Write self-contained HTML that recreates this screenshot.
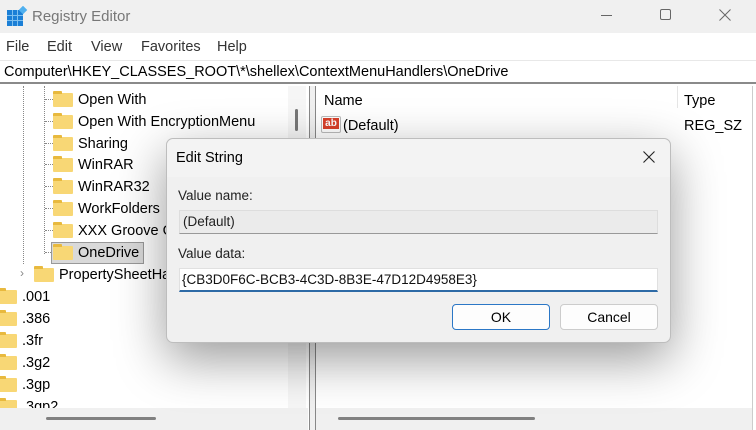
<!DOCTYPE html>
<html><head><meta charset="utf-8"><style>
*{margin:0;padding:0;box-sizing:border-box}
body{width:756px;height:430px;overflow:hidden;background:#fff;font-family:"Liberation Sans",sans-serif;font-size:14.5px;color:#000;position:relative}
.abs{position:absolute}
.title{left:0;top:0;width:756px;height:33px;background:#f0f0f0}
.menu{left:0;top:33px;width:756px;height:27px;background:#fff}
.menu span{position:absolute;top:6px;color:#333;font-size:14.5px}
.addr{left:0;top:60px;width:756px;height:24px;background:#fff;border-top:1px solid #e8e8e8;border-bottom:2px solid #8a8a8a}
.row{position:absolute;height:20px;line-height:20px;white-space:nowrap}
.fold{position:absolute;width:20px;height:14px;background:#f8d775;border-radius:1px}
.fold:before{content:"";position:absolute;left:0;top:-2px;width:9px;height:3px;background:#e8b93e;border-radius:1px 1px 0 0}
.vdot{position:absolute;width:0;border-left:1px dotted #888}
.hdot{position:absolute;height:0;border-top:1px dotted #888;width:8px}
</style></head><body>
<div class="abs title"></div>
<svg class="abs" style="left:6px;top:6px" width="22" height="22" viewBox="0 0 22 22">
<rect x="1" y="4" width="16" height="16" fill="#1b7fd6"/>
<g stroke="#7ec0f0" stroke-width="1"><line x1="6.5" y1="4" x2="6.5" y2="20"/><line x1="11.5" y1="4" x2="11.5" y2="20"/><line x1="1" y1="9.5" x2="17" y2="9.5"/><line x1="1" y1="14.5" x2="17" y2="14.5"/></g>
<rect x="14" y="1" width="6" height="6" fill="#4fb0ef" transform="rotate(45 17 4)"/></svg>
<div class="abs" style="left:32px;top:8px;font-size:15px;color:#777">Registry Editor</div>
<div class="abs" style="left:601px;top:15px;width:11px;height:1px;background:#666"></div>
<div class="abs" style="left:660px;top:9px;width:11px;height:11px;border:1px solid #666;border-radius:2px"></div>
<svg class="abs" style="left:719px;top:9px" width="12" height="12"><path d="M0.5 0.5L11.5 11.5M11.5 0.5L0.5 11.5" stroke="#666" stroke-width="1"/></svg>
<div class="abs menu"><span style="left:6px">File</span><span style="left:47px">Edit</span><span style="left:91px">View</span><span style="left:141px">Favorites</span><span style="left:217px">Help</span></div>
<div class="abs addr"><div style="position:absolute;left:4px;top:3px;font-size:14.5px">Computer\HKEY_CLASSES_ROOT\*\shellex\ContextMenuHandlers\OneDrive</div></div>

<div class="abs" style="left:0;top:86px;width:310px;height:344px;background:#fff;overflow:hidden">
<div class="vdot" style="left:23px;top:0;height:178px"></div>
<div class="vdot" style="left:44px;top:0;height:168px"></div>
</div>
<div id="tree"></div>
<div class="abs" style="left:288px;top:86px;width:18px;height:322px;background:#f6f6f6"></div>
<div class="abs" style="left:295px;top:109px;width:3px;height:22px;background:#777;border-radius:2px"></div>
<div class="abs" style="left:0;top:408px;width:308px;height:22px;background:#f0f0f0"></div>
<div class="abs" style="left:46px;top:417px;width:110px;height:3px;background:#808080;border-radius:2px"></div>
<div class="abs" style="left:309px;top:86px;width:1px;height:344px;background:#888"></div>
<div class="abs" style="left:315px;top:86px;width:1px;height:344px;background:#888"></div>
<div class="abs" style="left:310px;top:86px;width:5px;height:344px;background:#f0f0f0"></div>
<div class="abs" style="left:324px;top:93px">Name</div>
<div class="abs" style="left:677px;top:86px;width:1px;height:22px;background:#e5e5e5"></div>
<div class="abs" style="left:684px;top:93px">Type</div>
<div class="abs" style="left:321px;top:116px;width:20px;height:17px;background:#fff;border:1px solid #bbb;border-radius:2px"><div style="position:absolute;left:1px;top:1px;width:16px;height:11px;background:#d9402b;color:#fff;font-size:10px;font-weight:bold;line-height:11px;text-align:center">ab</div></div>
<div class="abs" style="left:343px;top:118px">(Default)</div>
<div class="abs" style="left:684px;top:118px">REG_SZ</div>
<div class="abs" style="left:316px;top:408px;width:436px;height:22px;background:#f0f0f0"></div>
<div class="abs" style="left:338px;top:417px;width:197px;height:3px;background:#808080;border-radius:2px"></div>
<div class="abs" style="left:752px;top:86px;width:4px;height:344px;background:#fff;border-left:1px solid #ccc"></div>

<div class="abs" style="left:166px;top:138px;width:505px;height:205px;background:#f0f0f0;border:1px solid #bdbdbd;border-radius:7px;box-shadow:0 16px 50px rgba(0,0,0,.4)">
<div style="position:absolute;left:0;top:0;width:503px;height:38px;background:#f3f3f3;border-radius:7px 7px 0 0"></div>
<div style="position:absolute;left:9px;top:11px;font-size:14.5px">Edit String</div>
<svg style="position:absolute;left:476px;top:12px" width="12" height="12"><path d="M0.5 0.5L11.5 11.5M11.5 0.5L0.5 11.5" stroke="#222" stroke-width="1.1"/></svg>
<div style="position:absolute;left:11px;top:49px;font-size:13.5px;color:#222">Value name:</div>
<div style="position:absolute;left:12px;top:71px;width:479px;height:24px;background:#ebebeb;border:1px solid #ddd;border-bottom-color:#999;font-size:13.5px;line-height:22px;padding-left:3px;color:#222">(Default)</div>
<div style="position:absolute;left:11px;top:107px;font-size:13.5px;color:#222">Value data:</div>
<div style="position:absolute;left:12px;top:129px;width:479px;height:24px;background:#fff;border:1px solid #e0e0e0;border-bottom:2px solid #2d6aa6;font-size:13.5px;line-height:21px;padding-left:2px;color:#111">{CB3D0F6C-BCB3-4C3D-8B3E-47D12D4958E3}</div>
<div style="position:absolute;left:285px;top:165px;width:98px;height:26px;background:#fdfdfd;border:1px solid #2b77c6;border-radius:4px;text-align:center;line-height:24px;font-size:14px">OK</div>
<div style="position:absolute;left:393px;top:165px;width:98px;height:26px;background:#fdfdfd;border:1px solid #ccc;border-radius:4px;text-align:center;line-height:24px;font-size:14px">Cancel</div>
</div>

<script>
var rows=[["Open With",99,2],["Open With EncryptionMenu",121,2],["Sharing",143,2],["WinRAR",164,2],["WinRAR32",186,2],["WorkFolders",208,2],["XXX Groove Groove",230,2],["OneDrive",252,2],["PropertySheetHandlers",274,1],[".001",296,0],[".386",318,0],[".3fr",340,0],[".3g2",362,0],[".3gp",384,0],[".3gp2",406,0]];
var h="";
rows.forEach(function(r){
 var y=r[1], lv=r[2], fx=lv==2?53:(lv==1?34:-3), tx=fx+25;
 if(lv==2) h+='<div class="hdot" style="left:45px;top:'+y+'px"></div>';
 if(r[0]=="OneDrive") h+='<div class="abs" style="left:51px;top:'+(y-10)+'px;width:93px;height:22px;background:#d9d9d9;border:1px solid #999"></div>';
 if(lv==1) h+='<div class="abs" style="left:20px;top:'+(y-8)+'px;color:#888;font-size:12px">&#x203A;</div>';
 h+='<div class="fold" style="left:'+fx+'px;top:'+(y-6)+'px"></div>';
 h+='<div class="row" style="left:'+tx+'px;top:'+(y-9)+'px">'+r[0]+'</div>';
});
document.getElementById("tree").innerHTML=h;
</script>
</body></html>
